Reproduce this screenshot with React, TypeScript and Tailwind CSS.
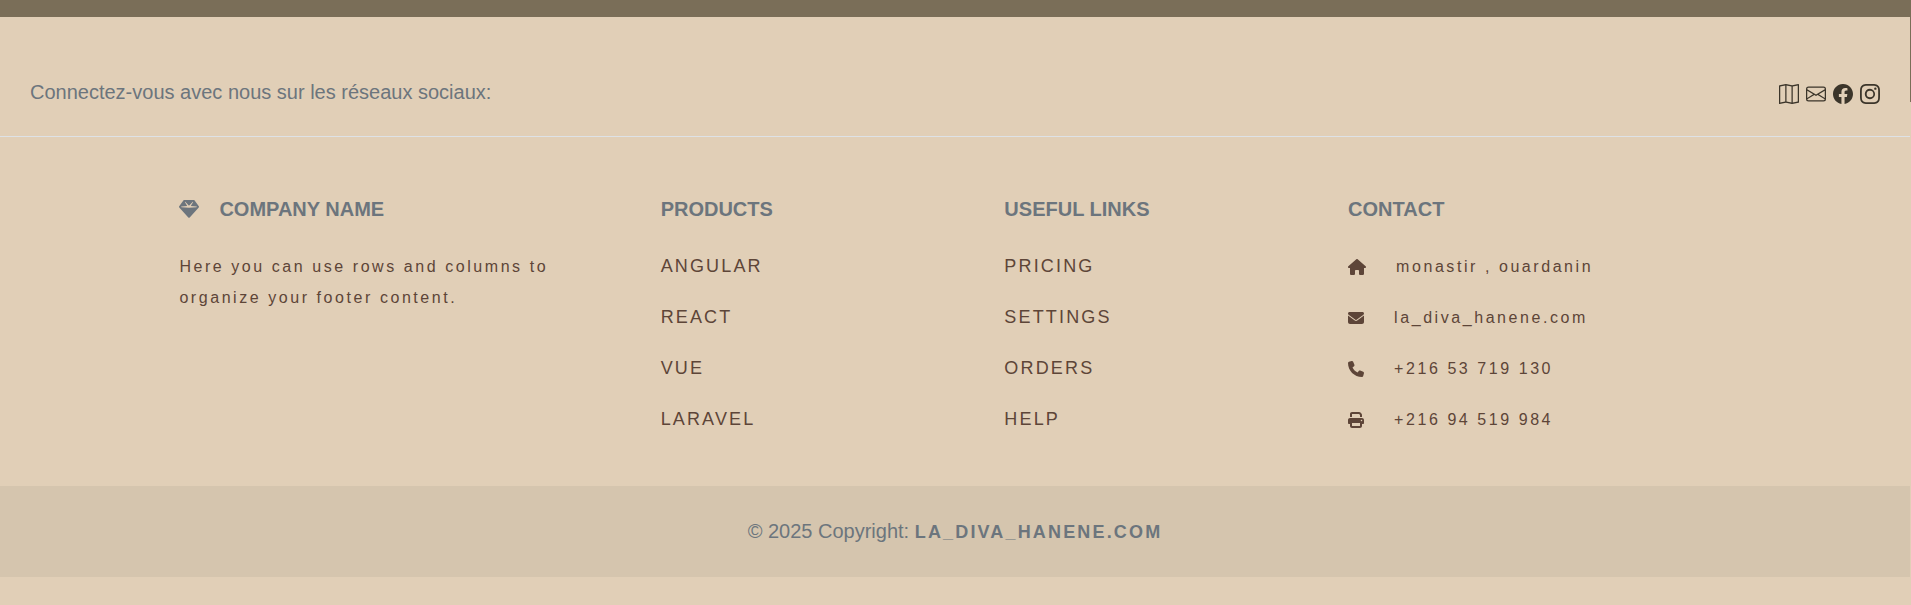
import { BsEnvelope, BsFacebook, BsInstagram, BsMap } from "react-icons/bs";
import { FaEnvelope, FaGem, FaHouse, FaPhone, FaPrint } from "react-icons/fa6";
import type { ReactNode } from "react";

const socials = [
  { label: "Carte", icon: <BsMap /> },
  { label: "E-mail", icon: <BsEnvelope /> },
  { label: "Facebook", icon: <BsFacebook /> },
  { label: "Instagram", icon: <BsInstagram /> },
];

const contacts = [
  { icon: <FaHouse className="h-4 w-[18px]" />, text: "monastir , ouardanin" },
  { icon: <FaEnvelope className="size-4" />, text: "la_diva_hanene.com" },
  { icon: <FaPhone className="size-4" />, text: "+216 53 719 130" },
  { icon: <FaPrint className="size-4" />, text: "+216 94 519 984" },
];

function Heading({ children }: { children: ReactNode }) {
  return (
    <h6 className="mb-[30px] flex h-6 items-center text-[20px] leading-6 font-bold text-[#6c757d] uppercase">
      {children}
    </h6>
  );
}

function LinkColumn({ title, links }: { title: string; links: string[] }) {
  return (
    <div className="mx-auto w-1/6 px-[15px]">
      <Heading>{title}</Heading>
      <ul className="flex flex-col gap-5">
        {links.map((link) => (
          <li key={link} className="h-[31px]">
            <a href="#!" className="text-[18px] leading-[31px] tracking-[0.12em] uppercase">
              {link}
            </a>
          </li>
        ))}
      </ul>
    </div>
  );
}

export default function App() {
  return (
    <div className="relative min-h-screen bg-[#e1cfb7] pr-px font-['Liberation_Sans',Arial,sans-serif] text-[#5d4538]">
      <div className="-mr-px h-[17px] bg-[#7a6e58]" />
      <div className="absolute top-0 right-0 h-[102px] w-px bg-[#7a6e58]" />
      <footer>
        <section className="flex items-center justify-between border-b border-[#dee2e6] px-[30px] pt-[60px] pb-[29px] text-[20px] leading-[30px] text-[#6c757d]">
          <span>Connectez-vous avec nous sur les réseaux sociaux:</span>
          <div className="flex gap-[7px] pt-1 text-[#3b352a]">
            {socials.map(({ label, icon }) => (
              <a key={label} href="#!" aria-label={label} className="text-[20px]">
                {icon}
              </a>
            ))}
          </div>
        </section>

        <section className="mx-auto flex w-full max-w-[1650px] pt-[60px] pb-[51px]">
          <div className="mx-auto w-1/4 px-[15px]">
            <Heading>
              <FaGem className="mr-5 size-5" />
              Company name
            </Heading>
            <p className="text-[16px] leading-[31px] tracking-[0.16em]">
              Here you can use rows and columns to organize your footer content.
            </p>
          </div>
          <LinkColumn title="Products" links={["Angular", "React", "Vue", "Laravel"]} />
          <LinkColumn title="Useful links" links={["Pricing", "Settings", "Orders", "Help"]} />
          <div className="mx-auto w-1/4 px-[15px]">
            <Heading>Contact</Heading>
            <ul className="flex flex-col gap-5 text-[16px] leading-[31px] tracking-[0.16em]">
              {contacts.map(({ icon, text }) => (
                <li key={text} className="flex items-center gap-[30px]">
                  {icon}
                  {text}
                </li>
              ))}
            </ul>
          </div>
        </section>

        <div className="bg-[#d5c5ae] p-[30px] text-center text-[20px] leading-[30px] text-[#6c757d]">
          © 2025 Copyright:{" "}
          <a href="#!" className="text-[18px] font-bold tracking-[0.12em] uppercase">
            la_diva_hanene.com
          </a>
        </div>
      </footer>
    </div>
  );
}
